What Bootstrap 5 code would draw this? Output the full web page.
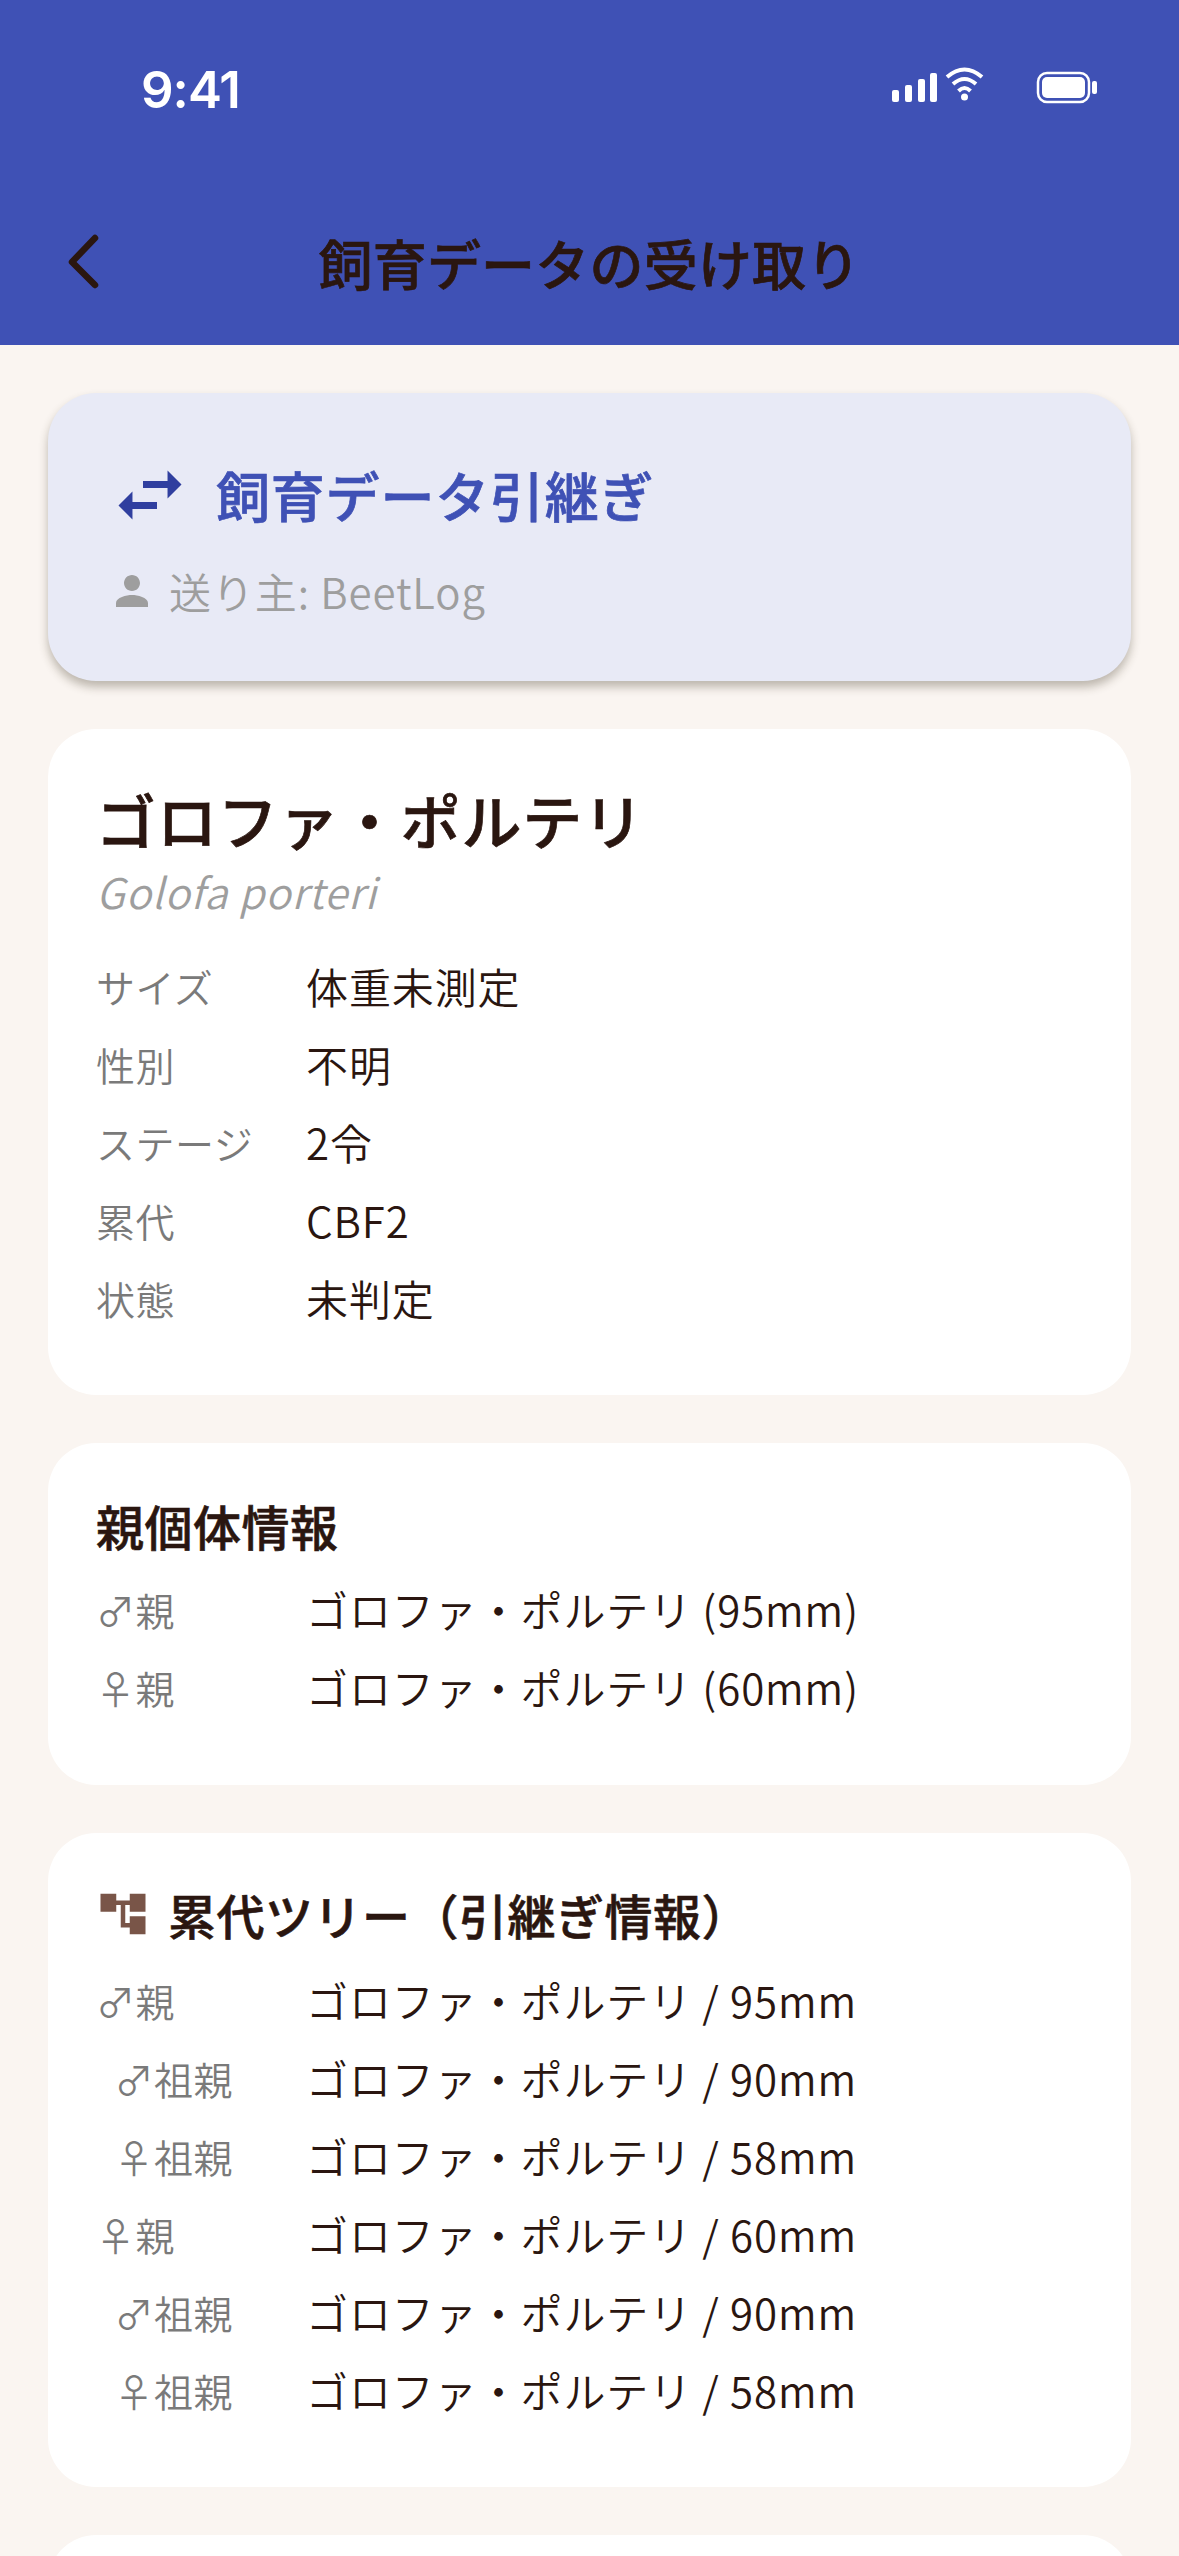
<!DOCTYPE html>
<html lang="ja"><head><meta charset="utf-8"><title>飼育データの受け取り</title>
<link href="https://cdn.jsdelivr.net/npm/bootstrap@5.3.0/dist/css/bootstrap.min.css" rel="stylesheet">
<style>
html,body{height:2556px;overflow:hidden}
body{background:#faf5f1;color:#2a1610;font-family:"Noto Sans CJK JP","Noto Sans",sans-serif;width:1179px}
.app-top{background:#3f51b5;height:345px;position:relative;flex:none}
.clock{left:141px;top:60px;position:absolute;font:600 51px/60px Inter,"Liberation Sans",sans-serif;color:#fff;letter-spacing:-1px}
.sys{position:absolute;left:890px;top:66px}
.back{position:absolute;left:67px;top:233px}
.top-title{position:absolute;left:0;right:0;top:226px;font-size:54px;line-height:74px;font-weight:500;-webkit-text-stroke:.7px currentColor;text-align:center;margin:0;letter-spacing:.2px}
.page-body{padding:48px 48px 0;gap:48px}
.sheet{border-radius:48px;background:#fff;border:0;padding:48px}
.hero{background:#e8eaf6;height:288px;padding:60px;box-shadow:0 6px 10px rgba(60,50,30,.32)}
.hero-title{color:#3f51b5;font-size:54px;line-height:84px;font-weight:500;-webkit-text-stroke:.7px currentColor;margin:0;gap:24px;letter-spacing:.8px}
.hero-sub{color:#9e9e9e;font-size:42px;line-height:60px;margin-top:24px;gap:13px;font-weight:350;letter-spacing:.9px}
.sp-name{font-size:60px;line-height:80px;font-weight:500;-webkit-text-stroke:.7px currentColor;margin:0;letter-spacing:.9px}
.sp-latin{font:italic 350 42px/58px "Noto Sans CJK JP",sans-serif;color:#9e9e9e;margin:3px 0 27px;letter-spacing:.9px}
.sec-title{font-size:48px;line-height:66px;font-weight:500;-webkit-text-stroke:.6px currentColor;margin:0 0 12px;gap:18px;letter-spacing:.5px}
.kv{min-height:78px;font-size:42px;line-height:78px;font-weight:350;letter-spacing:.9px}
.kv-l{width:210px;flex:none;color:#7a7a7a;font-size:39px;white-space:pre;letter-spacing:.5px}
.first-card{height:666px;padding-top:50px}
.par{height:342px;padding-top:49px}
.tree{height:654px}
.tree .sec-title{margin-bottom:14px}
</style></head><body class="d-flex flex-column">
<header class="app-top">
<div class="clock">9:41</div>
<svg class="sys" width="210" height="50" viewBox="0 0 210 50" fill="#fff">
<rect x="2" y="24" width="7" height="12" rx="2"/><rect x="15" y="19" width="7" height="17" rx="2"/><rect x="28" y="13" width="7" height="23" rx="2"/><rect x="40" y="7" width="7" height="29" rx="2"/>
<g fill="none" stroke="#fff" stroke-width="4"><path d="M57 11Q74.500-4 92 11"/><path d="M63 18Q74.500 8 86 18"/><path d="M68.500 25Q74.500 19 80.500 25"/></g><circle cx="74.500" cy="31" r="3.500"/>
<rect x="148" y="7" width="51" height="29" rx="9" fill="none" stroke="#fff" stroke-width="2.500"/><rect x="152" y="11" width="43" height="21" rx="5"/><rect x="202" y="15" width="5" height="13" rx="2"/>
</svg>
<svg class="back" width="32" height="56" viewBox="0 0 32 56" fill="none" stroke="#2a1610" stroke-width="6.500" stroke-linecap="round" stroke-linejoin="round"><path d="M28 5 5 29l23 23"/></svg>
<h1 class="top-title">飼育データの受け取り</h1>
</header>
<main class="page-body d-flex flex-column">
<section class="card sheet hero">
<h2 class="hero-title d-flex align-items-center"><svg width="84" height="84" viewBox="0 0 24 24" fill="#303f9f"><path d="M6.990 11 3 15l3.990 4v-3H14v-2H6.990zM21 9l-3.990-4v3H10v2h7.010v3z"/></svg>飼育データ引継ぎ</h2>
<div class="hero-sub d-flex align-items-center"><svg width="48" height="48" viewBox="0 0 24 24" fill="#9e9e9e"><path d="M12 12c2.200 0 4-1.800 4-4s-1.800-4-4-4-4 1.800-4 4 1.800 4 4 4zm0 2c-2.700 0-8 1.300-8 4v2h16v-2c0-2.700-5.300-4-8-4z"/></svg><span>送り主: BeetLog</span></div>
</section>
<section class="card sheet first-card">
<h3 class="sp-name">ゴロファ・ポルテリ</h3>
<div class="sp-latin">Golofa porteri</div>
<div class="kv d-flex"><div class="kv-l">サイズ</div><div>体重未測定</div></div>
<div class="kv d-flex"><div class="kv-l">性別</div><div>不明</div></div>
<div class="kv d-flex"><div class="kv-l">ステージ</div><div>2令</div></div>
<div class="kv d-flex"><div class="kv-l">累代</div><div>CBF2</div></div>
<div class="kv d-flex"><div class="kv-l">状態</div><div>未判定</div></div>
</section>
<section class="card sheet par">
<h3 class="sec-title">親個体情報</h3>
<div class="kv d-flex"><div class="kv-l">♂親</div><div>ゴロファ・ポルテリ (95mm)</div></div>
<div class="kv d-flex"><div class="kv-l">♀親</div><div>ゴロファ・ポルテリ (60mm)</div></div>
</section>
<section class="card sheet tree">
<h3 class="sec-title d-flex align-items-center"><svg width="54" height="54" viewBox="0 0 24 24" fill="#795548"><path d="M22 11V3h-7v3H9V3H2v8h7V8h2v10h4v3h7v-8h-7v3h-2V8h2v3z"/></svg>累代ツリー（引継ぎ情報）</h3>
<div class="kv d-flex"><div class="kv-l">♂親</div><div>ゴロファ・ポルテリ / 95mm</div></div>
<div class="kv d-flex"><div class="kv-l">  ♂祖親</div><div>ゴロファ・ポルテリ / 90mm</div></div>
<div class="kv d-flex"><div class="kv-l">  ♀祖親</div><div>ゴロファ・ポルテリ / 58mm</div></div>
<div class="kv d-flex"><div class="kv-l">♀親</div><div>ゴロファ・ポルテリ / 60mm</div></div>
<div class="kv d-flex"><div class="kv-l">  ♂祖親</div><div>ゴロファ・ポルテリ / 90mm</div></div>
<div class="kv d-flex"><div class="kv-l">  ♀祖親</div><div>ゴロファ・ポルテリ / 58mm</div></div>
</section>
<section class="card sheet last-stub"></section>
</main>
</body></html>
